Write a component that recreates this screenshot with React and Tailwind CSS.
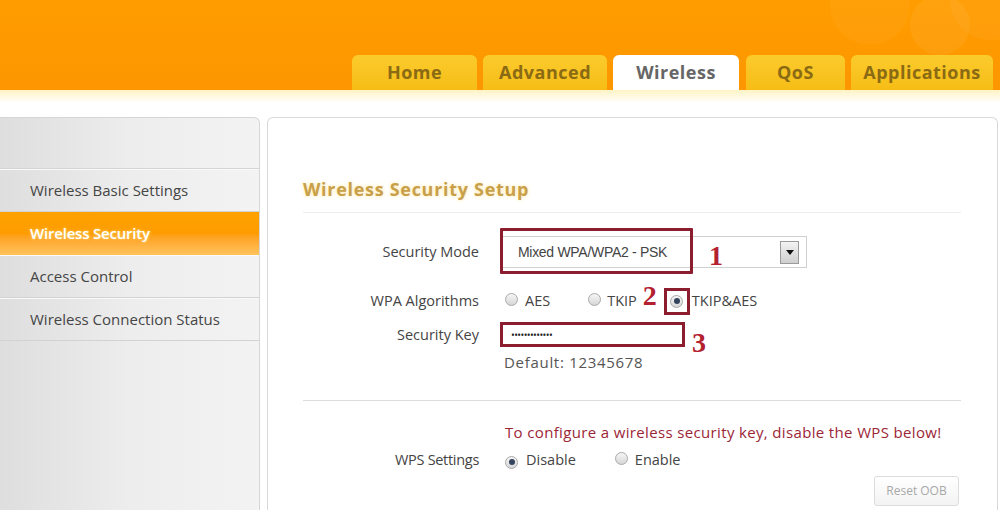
import React from 'react';

const tabs = [
  { label: 'Home', w: 'w-[125px]' },
  { label: 'Advanced', w: 'w-[124px]' },
  { label: 'Wireless', w: 'w-[126px]', active: true },
  { label: 'QoS', w: 'w-[99px] ml-px' },
  { label: 'Applications', w: 'w-[142px]' },
];

const menu = [
  { label: 'Wireless Basic Settings' },
  { label: 'Wireless Security', active: true },
  { label: 'Access Control' },
  { label: 'Wireless Connection Status' },
];

const Radio = ({ checked }) => (
  <span className="inline-flex w-[13px] h-[13px] shrink-0 rounded-full border border-[#a9a9a9] bg-linear-to-b from-[#f6f6f6] to-[#d6d6d6] items-center justify-center">
    {checked && <span className="w-[6px] h-[6px] rounded-full bg-[#33445c]" />}
  </span>
);

const Mark = ({ children, className = '' }) => (
  <span
    className={`font-['Liberation_Serif',serif] font-bold text-[28px] leading-none text-[#b3202f] ${className}`}
  >
    {children}
  </span>
);

export default function App() {
  return (
    <div className="w-[1000px] h-[510px] overflow-hidden bg-white font-['Open_Sans',sans-serif] text-[14.5px] text-[#444]">
      {/* Header */}
      <div className="relative h-[90px] bg-linear-to-b from-[#ff9d00] to-[#fd9600] flex items-end pl-[352px] gap-[6px] overflow-hidden">
        <span className="absolute left-[830px] -top-[35px] w-[80px] h-[80px] rounded-full bg-white/[0.03]" />
        <span className="absolute left-[910px] -top-[5px] w-[60px] h-[60px] rounded-full bg-white/[0.05]" />
        <span className="absolute left-[950px] -top-[40px] w-[80px] h-[80px] rounded-full bg-white/[0.04]" />
        {tabs.map((t) => (
          <div
            key={t.label}
            className={`${t.w} relative h-[35px] rounded-t-[6px] flex items-center justify-center font-bold text-[18px] tracking-[0.5px] ${
              t.active
                ? 'bg-white text-[#666]'
                : 'bg-linear-to-b from-[#fbcb2c] to-[#f6bd14] text-[#8b6a14]'
            }`}
          >
            {t.label}
          </div>
        ))}
      </div>

      {/* Glow strip */}
      <div className="h-[27px] bg-linear-to-b from-[#fff3c4] via-white to-white" />

      <div className="flex h-[393px]">
        {/* Sidebar */}
        <div className="w-[260px] shrink-0 rounded-tr-[6px] border-t border-r border-[#d6d6d6] bg-linear-to-r from-[#dedede] via-[#ededed] to-[#f3f3f3] text-[15px]">
          <div className="h-[51px] border-b border-[#d4d4d4]" />
          {menu.map((m) =>
            m.active ? (
              <div
                key={m.label}
                className="h-[43px] flex items-center pl-[30px] bg-linear-to-b from-[#ffa200] via-[#fd9c00] to-[#ffc35a] text-white font-semibold tracking-[-0.2px] [text-shadow:0_0_3px_#ffe28a]"
              >
                {m.label}
              </div>
            ) : (
              <div
                key={m.label}
                className="h-[43px] flex items-center pl-[30px] border-b border-[#d2d2d2] shadow-[inset_0_1px_0_#fafafa] text-[#454545]"
              >
                {m.label}
              </div>
            )
          )}
        </div>

        {/* Main panel */}
        <div className="flex-1 ml-[7px] mr-[2px] border-t border-l border-r border-[#d9d9d9] rounded-t-[6px] pl-[35px] pr-[36px] pt-[59px]">
          <div className="pb-[11px] border-b border-[#eeeeee]">
            <div className="h-[24px] leading-6 font-bold text-[18px] tracking-[0.7px] text-[#c9a04a] [text-shadow:0_0_4px_#ffe6a0]">
              Wireless Security Setup
            </div>
          </div>

          {/* Security Mode */}
          <div className="flex items-center h-[32px] mt-[23px]">
            <div className="w-[176px] text-right">Security Mode</div>
            <div className="ml-[21px] relative w-[307px] h-[32px] border border-[#d0d0d0] bg-white flex items-center justify-between pl-[17px] pr-[7px]">
              <span className="font-['Liberation_Sans',sans-serif] text-[14px] text-[#444] tracking-[-0.3px]">
                Mixed WPA/WPA2 - PSK
              </span>
              <span className="w-[19px] h-[23px] border border-[#9a9a9a] bg-linear-to-b from-[#f3f3f3] to-[#cfcfcf] flex items-center justify-center">
                <svg width="8" height="5" viewBox="0 0 8 5">
                  <path d="M0 0h8L4 5z" fill="#111" />
                </svg>
              </span>
              <span className="absolute -left-px -top-[9px] w-[193px] h-[46px] border-[3px] border-[#8c1d2e] rounded-[1px]" />
              <Mark className="absolute left-[208px] top-[5px]">1</Mark>
            </div>
          </div>

          {/* WPA Algorithms */}
          <div className="flex items-center h-[26px] mt-[20px]">
            <div className="w-[176px] text-right">WPA Algorithms</div>
            <div className="ml-[21px] flex items-center">
              <span className="ml-[5px]"><Radio /></span>
              <span className="ml-[7px]">AES</span>
              <span className="ml-[38px]"><Radio /></span>
              <span className="ml-[6px]">TKIP</span>
              <Mark className="ml-[6px] -mt-[10px]">2</Mark>
              <span className="ml-[7px] w-[26px] h-[27px] border-[3px] border-[#8c1d2e] flex items-center justify-center">
                <Radio checked />
              </span>
              <span className="ml-[2px]">TKIP&amp;AES</span>
            </div>
          </div>

          {/* Security Key */}
          <div className="flex items-center h-[25px] mt-[8px]">
            <div className="w-[176px] text-right">Security Key</div>
            <div className="ml-[21px] flex items-center">
              <div className="w-[185px] h-[25px] border-[3px] border-[#8c1d2e] bg-white flex items-center pl-[8px] text-[10px] tracking-[-0.6px] text-[#222] leading-none">
                •••••••••••••
              </div>
              <Mark className="ml-[7px] translate-y-[8px]">3</Mark>
            </div>
          </div>

          {/* Default */}
          <div className="flex items-center h-[20px] mt-[5px]">
            <div className="ml-[201px] text-[#555] text-[15px] tracking-[0.7px]">Default: 12345678</div>
          </div>

          <div className="mt-[28px] border-t border-[#dcdcdc]" />

          <div className="flex items-center h-[20px] mt-[21px]">
            <div className="ml-[202px] text-[#9b2636] text-[15px] tracking-[0.35px]">
              To configure a wireless security key, disable the WPS below!
            </div>
          </div>

          {/* WPS */}
          <div className="flex items-center h-[22px] mt-[7px]">
            <div className="w-[176px] text-right tracking-[-0.3px]">WPS Settings</div>
            <div className="ml-[21px] flex items-center">
              <span className="ml-[5px]"><Radio checked /></span>
              <span className="ml-[8px]">Disable</span>
              <span className="ml-[39px]"><Radio /></span>
              <span className="ml-[7px]">Enable</span>
            </div>
          </div>

          <div className="flex justify-end mt-[5px] pr-[2px]">
            <div className="w-[85px] h-[30px] border border-[#dcdcdc] rounded-[3px] bg-linear-to-b from-white to-[#f3f3f3] flex items-center justify-center text-[12px] text-[#a8a8a8]">
              Reset OOB
            </div>
          </div>
        </div>
      </div>
    </div>
  );
}
